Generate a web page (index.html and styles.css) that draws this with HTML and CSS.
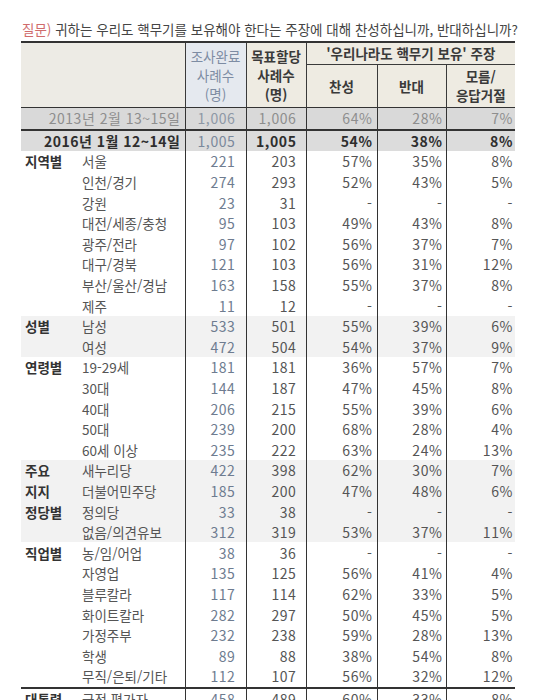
FILE: index.html
```html
<!DOCTYPE html>
<html lang="ko">
<head>
<meta charset="utf-8">
<link rel="stylesheet" href="styles.css">
</head>
<body>
<div class="page">
  <div class="title"><span class="q">질문)</span> 귀하는 우리도 핵무기를 보유해야 한다는 주장에 대해 찬성하십니까, 반대하십니까?</div>
  <table class="survey">
    <colgroup>
      <col class="w-g"><col class="w-s"><col class="w-n1"><col class="w-n2"><col class="w-p1"><col class="w-p2"><col class="w-p3">
    </colgroup>
    <thead>
      <tr class="hr1">
        <th colspan="2" rowspan="2" class="h-label"></th>
        <th rowspan="2" class="h-n1">조사완료<br>사례수<br>(명)</th>
        <th rowspan="2" class="h-n2">목표할당<br>사례수<br>(명)</th>
        <th colspan="3" class="h-group">'우리나라도 핵무기 보유' 주장</th>
      </tr>
      <tr class="hr2">
        <th class="h-sub b3">찬성</th>
        <th class="h-sub b4">반대</th>
        <th class="h-sub b5">모름/<br>응답거절</th>
      </tr>
    </thead>
    <tbody>
      <tr class="r-prev">
        <td colspan="2" class="lab-date">2013년 2월 13~15일</td>
        <td class="n1">1,006</td><td class="n2">1,006</td><td class="p1">64%</td><td class="p2">28%</td><td class="p3">7%</td>
      </tr>
      <tr class="r-now">
        <td colspan="2" class="lab-date">2016년 1월 12~14일</td>
        <td class="n1">1,005</td><td class="n2">1,005</td><td class="p1">54%</td><td class="p2">38%</td><td class="p3">8%</td>
      </tr>
      <tr><td class="g">지역별</td><td class="s">서울</td><td class="n1">221</td><td class="n2">203</td><td class="p1">57%</td><td class="p2">35%</td><td class="p3">8%</td></tr>
      <tr><td class="g"></td><td class="s">인천/경기</td><td class="n1">274</td><td class="n2">293</td><td class="p1">52%</td><td class="p2">43%</td><td class="p3">5%</td></tr>
      <tr><td class="g"></td><td class="s">강원</td><td class="n1">23</td><td class="n2">31</td><td class="p1">-</td><td class="p2">-</td><td class="p3">-</td></tr>
      <tr><td class="g"></td><td class="s">대전/세종/충청</td><td class="n1">95</td><td class="n2">103</td><td class="p1">49%</td><td class="p2">43%</td><td class="p3">8%</td></tr>
      <tr><td class="g"></td><td class="s">광주/전라</td><td class="n1">97</td><td class="n2">102</td><td class="p1">56%</td><td class="p2">37%</td><td class="p3">7%</td></tr>
      <tr><td class="g"></td><td class="s">대구/경북</td><td class="n1">121</td><td class="n2">103</td><td class="p1">56%</td><td class="p2">31%</td><td class="p3">12%</td></tr>
      <tr><td class="g"></td><td class="s">부산/울산/경남</td><td class="n1">163</td><td class="n2">158</td><td class="p1">55%</td><td class="p2">37%</td><td class="p3">8%</td></tr>
      <tr><td class="g"></td><td class="s">제주</td><td class="n1">11</td><td class="n2">12</td><td class="p1">-</td><td class="p2">-</td><td class="p3">-</td></tr>
      <tr class="shade"><td class="g">성별</td><td class="s">남성</td><td class="n1">533</td><td class="n2">501</td><td class="p1">55%</td><td class="p2">39%</td><td class="p3">6%</td></tr>
      <tr class="shade"><td class="g"></td><td class="s">여성</td><td class="n1">472</td><td class="n2">504</td><td class="p1">54%</td><td class="p2">37%</td><td class="p3">9%</td></tr>
      <tr><td class="g">연령별</td><td class="s">19-29세</td><td class="n1">181</td><td class="n2">181</td><td class="p1">36%</td><td class="p2">57%</td><td class="p3">7%</td></tr>
      <tr><td class="g"></td><td class="s">30대</td><td class="n1">144</td><td class="n2">187</td><td class="p1">47%</td><td class="p2">45%</td><td class="p3">8%</td></tr>
      <tr><td class="g"></td><td class="s">40대</td><td class="n1">206</td><td class="n2">215</td><td class="p1">55%</td><td class="p2">39%</td><td class="p3">6%</td></tr>
      <tr><td class="g"></td><td class="s">50대</td><td class="n1">239</td><td class="n2">200</td><td class="p1">68%</td><td class="p2">28%</td><td class="p3">4%</td></tr>
      <tr><td class="g"></td><td class="s">60세 이상</td><td class="n1">235</td><td class="n2">222</td><td class="p1">63%</td><td class="p2">24%</td><td class="p3">13%</td></tr>
      <tr class="shade"><td class="g">주요</td><td class="s">새누리당</td><td class="n1">422</td><td class="n2">398</td><td class="p1">62%</td><td class="p2">30%</td><td class="p3">7%</td></tr>
      <tr class="shade"><td class="g">지지</td><td class="s">더불어민주당</td><td class="n1">185</td><td class="n2">200</td><td class="p1">47%</td><td class="p2">48%</td><td class="p3">6%</td></tr>
      <tr class="shade"><td class="g">정당별</td><td class="s">정의당</td><td class="n1">33</td><td class="n2">38</td><td class="p1">-</td><td class="p2">-</td><td class="p3">-</td></tr>
      <tr class="shade"><td class="g"></td><td class="s">없음/의견유보</td><td class="n1">312</td><td class="n2">319</td><td class="p1">53%</td><td class="p2">37%</td><td class="p3">11%</td></tr>
      <tr><td class="g">직업별</td><td class="s">농/임/어업</td><td class="n1">38</td><td class="n2">36</td><td class="p1">-</td><td class="p2">-</td><td class="p3">-</td></tr>
      <tr><td class="g"></td><td class="s">자영업</td><td class="n1">135</td><td class="n2">125</td><td class="p1">56%</td><td class="p2">41%</td><td class="p3">4%</td></tr>
      <tr><td class="g"></td><td class="s">블루칼라</td><td class="n1">117</td><td class="n2">114</td><td class="p1">62%</td><td class="p2">33%</td><td class="p3">5%</td></tr>
      <tr><td class="g"></td><td class="s">화이트칼라</td><td class="n1">282</td><td class="n2">297</td><td class="p1">50%</td><td class="p2">45%</td><td class="p3">5%</td></tr>
      <tr><td class="g"></td><td class="s">가정주부</td><td class="n1">232</td><td class="n2">238</td><td class="p1">59%</td><td class="p2">28%</td><td class="p3">13%</td></tr>
      <tr><td class="g"></td><td class="s">학생</td><td class="n1">89</td><td class="n2">88</td><td class="p1">38%</td><td class="p2">54%</td><td class="p3">8%</td></tr>
      <tr><td class="g"></td><td class="s">무직/은퇴/기타</td><td class="n1">112</td><td class="n2">107</td><td class="p1">56%</td><td class="p2">32%</td><td class="p3">12%</td></tr>
      <tr class="r-next"><td class="g">대통령</td><td class="s">긍정 평가자</td><td class="n1">458</td><td class="n2">489</td><td class="p1">60%</td><td class="p2">33%</td><td class="p3">8%</td></tr>
    </tbody>
  </table>
</div>
</body>
</html>
```

FILE: styles.css
```css
html, body {
  margin: 0;
  padding: 0;
  background: #ffffff;
}

body {
  font-family: "Noto Sans CJK KR", "Noto Sans", sans-serif;
  color: #555555;
  overflow: hidden;
  height: 700px;
}

.page {
  padding: 20px 0 0 21px;
}

.title {
  font-size: 13.5px;
  line-height: 19px;
  color: #454545;
  white-space: nowrap;
  margin: 0 0 2px 1px;
  letter-spacing: 0;
}

.q {
  color: #d06b6b;
}

.survey {
  border-collapse: collapse;
  table-layout: fixed;
  width: 494px;
}

.w-g { width: 58px; }
.w-s { width: 106px; }
.w-n1 { width: 61px; }
.w-n2 { width: 60px; }
.w-p1 { width: 71px; }
.w-p2 { width: 69px; }
.w-p3 { width: 69px; }

/* header */
.survey thead th {
  font-size: 13.5px;
  line-height: 19px;
  font-weight: 700;
  color: #3a3a3a;
  padding: 0;
  text-align: center;
  vertical-align: middle;
  background: #eeebe2;
}

.hr1 th {
  border-top: 2px solid #333333;
  height: 21px;
}

.hr2 th {
  height: 42px;
}

.survey thead th.h-label {
  background: #edebe5;
  border-right: 1px solid #3a3a3a;
}

.survey thead th.h-n1 {
  background: #e5e9ef;
  color: #7d8ca3;
  font-weight: 400;
  border-right: 1px solid #3a3a3a;
}

.survey thead th.h-n2 {
  border-right: 1px solid #3a3a3a;
}

.survey thead th.h-group {
  border-bottom: 1px solid #3a3a3a;
}

.survey thead th.b3,
.survey thead th.b4 {
  border-right: 1px solid #3a3a3a;
}

/* body */
.survey td {
  height: 20.6px;
  padding: 0;
  line-height: 20px;
  white-space: nowrap;
  overflow: hidden;
}

.g {
  font-size: 13.5px;
  font-weight: 700;
  color: #333333;
  padding-left: 4px !important;
}

.s {
  font-size: 13.5px;
  color: #555555;
  padding-left: 3px !important;
  border-right: 1px solid #333333;
}

.n1, .n2, .p1, .p2, .p3 {
  font-size: 14px;
  text-align: right;
  letter-spacing: 0.6px;
}

.n1 {
  color: #6e7c90;
  padding-right: 10px !important;
  border-right: 1px solid #333333;
}

.n2 {
  padding-right: 9px !important;
  border-right: 1px solid #333333;
}

.p1 {
  padding-right: 4px !important;
  border-right: 1px solid #333333;
}

.p2 {
  padding-right: 3px !important;
  border-right: 1px solid #333333;
}

.p3 {
  padding-right: 2px !important;
}

.lab-date {
  font-size: 14px;
  text-align: right;
  padding-right: 4px !important;
  border-right: 1px solid #333333;
  letter-spacing: 0.5px;
}

.r-prev td {
  background: #d9d9d9;
  color: #8e8e8e;
  border-top: 1.5px solid #333333;
}

.r-prev td.n1 {
  color: #8e98a6;
}

.r-now td {
  background: #dcdcdc;
  color: #2e2e2e;
  font-weight: 700;
  border-top: 2px solid #333333;
}

.r-now td.n1 {
  color: #7a889b;
  font-weight: 400;
}

.shade td {
  background: #f2f2f2;
}

.r-next td {
  border-top: 2px solid #333333;
}
```
